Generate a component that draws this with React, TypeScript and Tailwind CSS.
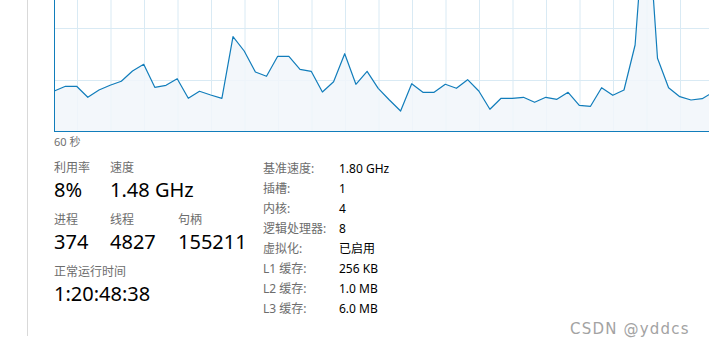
const cpu = [
  91, 86.3, 86.3, 97.3, 90, 85.3, 81.3, 71, 64.3, 87.3, 85.3, 78.7, 98.3, 91.3, 95, 98.3,
  36.7, 51, 72, 76.3, 56.3, 56.3, 69.3, 71.3, 92, 81.7, 53.7, 84.3, 71.3, 88.3, 100, 111,
  83.7, 92.3, 92.3, 84.3, 88.3, 79.7, 91, 109.3, 98.3, 98.3, 97.3, 102.3, 97.3, 99.3, 92.3,
  105.3, 106.3, 87.7, 95.3, 90, 45, -105, 58.3, 87.7, 96.7, 100, 98.7, 92, 90,
];

const specs: [string, string][] = [
  ['基准速度:', '1.80 GHz'],
  ['插槽:', '1'],
  ['内核:', '4'],
  ['逻辑处理器:', '8'],
  ['虚拟化:', '已启用'],
  ['L1 缓存:', '256 KB'],
  ['L2 缓存:', '1.0 MB'],
  ['L3 缓存:', '6.0 MB'],
];

function Chart() {
  const pts = cpu.map((y, i) => `${(0.3 + i * 11.17).toFixed(1)},${y}`);
  const line = 'M' + pts.join(' L');
  const area = `${line} L${(0.3 + (cpu.length - 1) * 11.17).toFixed(1)},131 L0.3,131 Z`;
  return (
    <svg width="655" height="132" className="block">
      {Array.from({ length: 19 }, (_, i) => (
        <line key={i} x1={23.5 + i * 33.5} y1="0" x2={23.5 + i * 33.5} y2="131" stroke="#d9eaf4" strokeWidth="1" />
      ))}
      <line x1="0" y1="28.5" x2="655" y2="28.5" stroke="#d9eaf4" strokeWidth="1" />
      <line x1="0" y1="80.5" x2="655" y2="80.5" stroke="#d9eaf4" strokeWidth="1" />
      <path d={area} fill="#f1f6fa" fillOpacity="0.85" />
      <path d={line} fill="none" stroke="#117dbb" strokeWidth="1.2" strokeLinejoin="round" />
      <line x1="0.5" y1="0" x2="0.5" y2="132" stroke="#117dbb" strokeWidth="1" />
      <line x1="0" y1="131.5" x2="655" y2="131.5" stroke="#117dbb" strokeWidth="1" />
    </svg>
  );
}

function Stat({ label, value, w }: { label: string; value: string; w: string }) {
  return (
    <div className={w}>
      <div className="text-[12px] leading-[16px] text-[#6d6d6d]">{label}</div>
      <div className="text-[20px] leading-[24px] text-black mt-[2px] whitespace-nowrap">{value}</div>
    </div>
  );
}

export default function App() {
  return (
    <div
      className="relative flex w-[709px] h-[352px] overflow-hidden bg-white"
      style={{ fontFamily: '"Noto Sans", "Noto Sans CJK SC", sans-serif' }}
    >
      <div className="w-[27px] shrink-0" />
      <div className="h-[336px] flex-1 min-w-0 border-l border-[#d9d9d9] pl-[26px]">
        <Chart />
        <div className="text-[11px] leading-[14px] text-[#707070] mt-[3px]">60 秒</div>

        <div className="flex mt-[11px]">
          <div className="w-[209px] shrink-0 flex flex-col gap-[10px]">
            <div className="flex">
              <Stat label="利用率" value="8%" w="w-[56px]" />
              <Stat label="速度" value="1.48 GHz" w="w-[120px]" />
            </div>
            <div className="flex">
              <Stat label="进程" value="374" w="w-[56px]" />
              <Stat label="线程" value="4827" w="w-[68px]" />
              <Stat label="句柄" value="155211" w="w-[80px]" />
            </div>
            <Stat label="正常运行时间" value="1:20:48:38" w="w-[160px]" />
          </div>

          <div className="flex flex-col -mt-[1px]">
            {specs.map(([k, v]) => (
              <div key={k} className="flex h-[20px] items-center text-[12px]">
                <span className="w-[76px] text-[#6d6d6d]">{k}</span>
                <span className="text-black">{v}</span>
              </div>
            ))}
          </div>
        </div>
      </div>

      <div className="absolute left-[570px] top-[319px] font-['DejaVu_Sans',sans-serif] text-[15px] leading-[20px] tracking-[1.2px] text-[#a3a3a3]">
        CSDN @yddcs
      </div>
    </div>
  );
}
